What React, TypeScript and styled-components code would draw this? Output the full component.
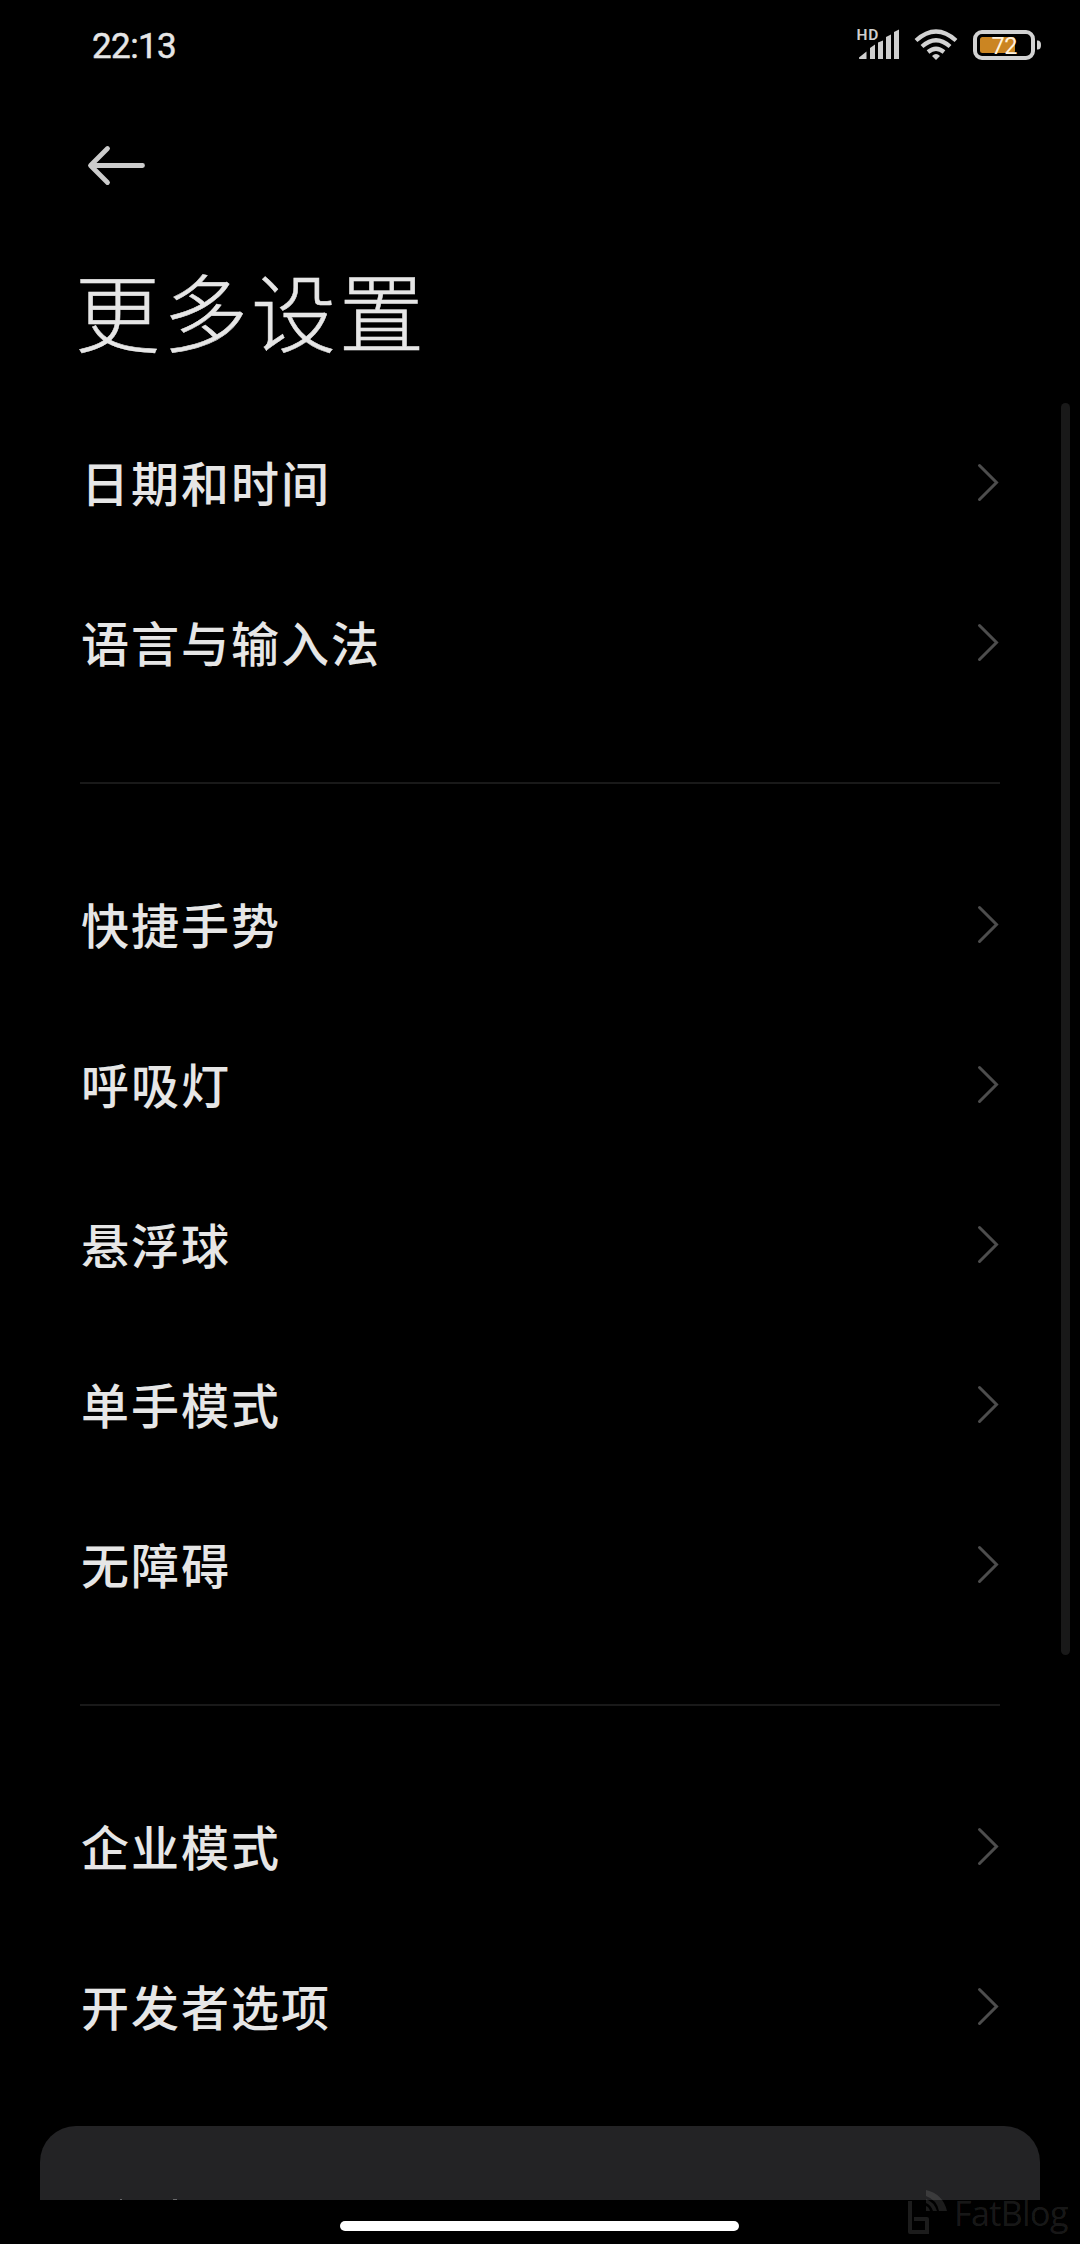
import React from "react";
import styled, { createGlobalStyle } from "styled-components";

const GlobalStyle = createGlobalStyle`
  html, body { margin: 0; padding: 0; background: #000; }
  * { box-sizing: border-box; }
`;

const Screen = styled.div`
  position: relative;
  display: flex;
  flex-direction: column;
  width: 1080px;
  height: 2244px;
  overflow: hidden;
  background: #000;
  color: #e6e6e6;
  font-family: "Noto Sans CJK SC", sans-serif;
`;

const StatusBar = styled.header`
  display: flex;
  justify-content: space-between;
  align-items: center;
  height: 90px;
  padding: 0 39px 0 92px;
`;

const Clock = styled.time`
  padding-top: 3px;
  font-family: Roboto, "Noto Sans CJK SC", sans-serif;
  font-size: 35px;
  line-height: 40px;
  font-weight: 400;
  letter-spacing: -0.6px;
  color: #e6e6e6;
  -webkit-text-stroke: 0.5px #e6e6e6;
`;

const StatusIcons = styled.svg`
  display: block;
  width: 184px;
  height: 40px;
`;

const NavBar = styled.nav`
  display: flex;
  align-items: center;
  height: 150px;
  padding: 0 84px;
`;

const BackIcon = styled.svg`
  display: block;
  width: 64px;
  height: 44px;
`;

const Title = styled.h1`
  height: 162px;
  margin: 0;
  padding: 9px 75px 0;
  font-size: 85px;
  line-height: 120px;
  font-weight: 300;
  letter-spacing: 3px;
  -webkit-text-stroke: 0.5px #e6e6e6;
`;

const Groups = styled.main`
  display: flex;
  flex-direction: column;
  padding: 0 80px;
`;

const Group = styled.section`
  & + & {
    margin-top: 60px;
    padding-top: 60px;
    border-top: 2px solid #191919;
  }
`;

const Row = styled.div`
  display: flex;
  justify-content: space-between;
  align-items: center;
  height: 160px;
`;

const Label = styled.span`
  padding: 0 0 3px 1px;
  font-size: 48px;
  line-height: 72px;
  font-weight: 500;
  letter-spacing: 2px;
`;

const ChevronIcon = styled.svg`
  display: block;
  width: 24px;
  height: 40px;
`;

const SuggestionCard = styled.aside`
  display: flex;
  align-items: flex-end;
  gap: 51px;
  height: 74px;
  margin: 40px 40px 0;
  padding: 0 80px;
  border-radius: 36px 36px 0 0;
  background: #232325;
`;

const ClippedStroke = styled.span<{ $width: number }>`
  width: ${({ $width }) => $width}px;
  height: 1px;
  background: #68686a;
`;

const ScrollThumb = styled.div`
  position: absolute;
  top: 403px;
  right: 10px;
  width: 9px;
  height: 1252px;
  border-radius: 5px;
  background: #191919;
`;

const HomeIndicator = styled.div`
  width: 399px;
  height: 10px;
  margin: 21px 0 0 340px;
  border-radius: 5px;
  background: #fff;
`;

const Watermark = styled.div`
  position: absolute;
  left: 906px;
  top: 2188px;
  display: flex;
  color: rgba(255, 255, 255, 0.11);
  font-family: "Open Sans", "Noto Sans", sans-serif;
  font-size: 34px;
  line-height: 50px;
  letter-spacing: -0.6px;
`;

const WatermarkLogo = styled.svg`
  display: block;
  width: 48px;
  height: 50px;
`;

const groups = [
  ["日期和时间", "语言与输入法"],
  ["快捷手势", "呼吸灯", "悬浮球", "单手模式", "无障碍"],
  ["企业模式", "开发者选项"],
];

const Chevron = () => (
  <ChevronIcon viewBox="0 0 24 40" fill="none" stroke="#4d4d4d" strokeWidth="3" strokeLinecap="round">
    <path d="M3.5 3.5 20.5 20.5 3.5 37.5" />
  </ChevronIcon>
);

export default function App() {
  return (
    <>
      <GlobalStyle />
      <Screen>
        <StatusBar>
          <Clock>22:13</Clock>
          <StatusIcons viewBox="857 25 184 40">
            <text x="856.5" y="40" fill="#cfcfcf" fontFamily="Roboto, sans-serif" fontSize="15.5" fontWeight="600" letterSpacing="0.8">HD</text>
            <g fill="#cfcfcf">
              <path d="M859 57.5 866.5 51.5V59H860Q858.5 59 859 57.5Z" />
              <path d="M870 48 875 44.5V59H870Z" />
              <path d="M878 42.5 883 40.5V59H878Z" />
              <path d="M886 37 891 34.5V59H886Z" />
              <path d="M894 32 899 29.5V59H894Z" />
            </g>
            <g fill="none" stroke="#d2d2d2" strokeWidth="4.2">
              <path d="M916 40.5Q936 22.5 956 40.5" />
              <path d="M922 46.5Q936 34 950 46.5" />
              <path d="M928 52Q936 45.5 944 52" />
            </g>
            <path d="M932 56Q936 52 940 56L936 60Z" fill="#d2d2d2" />
            <rect x="975" y="32" width="58" height="26" rx="7" fill="none" stroke="#d2d2d2" strokeWidth="4" />
            <rect x="980" y="37" width="35" height="16" rx="2.5" fill="#cb8522" />
            <path d="M1037 40.5Q1041 40 1041 45Q1041 50 1037 49.5Z" fill="#d2d2d2" />
            <text x="991.5" y="53.8" fill="#fff3df" fontFamily="Roboto, sans-serif" fontSize="23.5" letterSpacing="-0.5">72</text>
          </StatusIcons>
        </StatusBar>
        <NavBar>
          <BackIcon viewBox="84 143 64 44" fill="none" stroke="#cccccc" strokeWidth="4.8" strokeLinecap="round" strokeLinejoin="round">
            <path d="M142.5 165.5H91M107.5 148.5 90.5 165.5 107.5 182.5" />
          </BackIcon>
        </NavBar>
        <Title>更多设置</Title>
        <Groups>
          {groups.map((items) => (
            <Group key={items[0]}>
              {items.map((item) => (
                <Row key={item}>
                  <Label>{item}</Label>
                  <Chevron />
                </Row>
              ))}
            </Group>
          ))}
        </Groups>
        <SuggestionCard>
          <ClippedStroke $width={2} />
          <ClippedStroke $width={4} />
        </SuggestionCard>
        <HomeIndicator />
        <ScrollThumb />
        <Watermark>
          <WatermarkLogo viewBox="906 2188 48 50">
            <g fill="currentColor">
              <path d="M908 2201H912V2230H925V2221H914V2217H927Q929 2217 929 2219V2234H910Q908 2234 908 2232Z" />
              <path d="M926 2190Q943 2194 947 2211H939Q937 2200 926 2196Z" />
              <path d="M926 2199Q934 2202 937 2211H933Q931 2205 926 2203Z" />
              <path d="M926 2206Q929 2207 930 2211H926Z" />
            </g>
          </WatermarkLogo>
          <span>FatBlog</span>
        </Watermark>
      </Screen>
    </>
  );
}
